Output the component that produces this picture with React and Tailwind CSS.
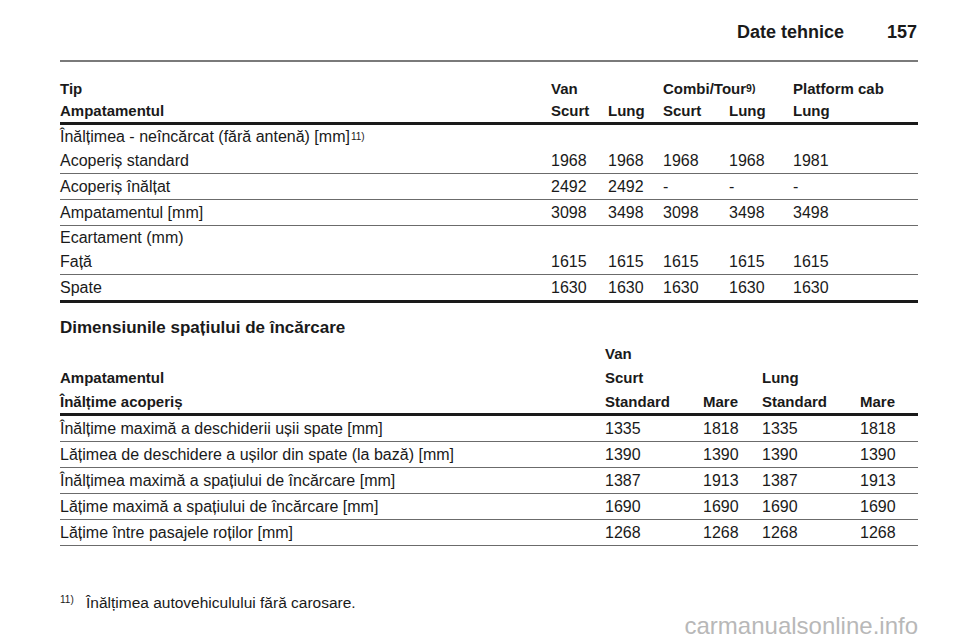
const specs = [
  { label: ["Înălțimea - neîncărcat (fără antenă) [mm]", "Acoperiș standard"], sup: "11)", values: ["1968", "1968", "1968", "1968", "1981"] },
  { label: ["Acoperiș înălțat"], values: ["2492", "2492", "-", "-", "-"] },
  { label: ["Ampatamentul [mm]"], values: ["3098", "3498", "3098", "3498", "3498"] },
  { label: ["Ecartament (mm)", "Față"], values: ["1615", "1615", "1615", "1615", "1615"] },
  { label: ["Spate"], values: ["1630", "1630", "1630", "1630", "1630"], last: true },
];

const cargo = [
  { label: "Înălțime maximă a deschiderii ușii spate [mm]", values: ["1335", "1818", "1335", "1818"] },
  { label: "Lățimea de deschidere a ușilor din spate (la bază) [mm]", values: ["1390", "1390", "1390", "1390"] },
  { label: "Înălțimea maximă a spațiului de încărcare [mm]", values: ["1387", "1913", "1387", "1913"] },
  { label: "Lățime maximă a spațiului de încărcare [mm]", values: ["1690", "1690", "1690", "1690"] },
  { label: "Lățime între pasajele roților [mm]", values: ["1268", "1268", "1268", "1268"] },
];

const grid1 = "grid grid-cols-[491px_57px_55px_66px_64px_1fr]";
const grid2 = "grid grid-cols-[545px_98px_59px_98px_1fr]";

function SpecRow({ row }) {
  const two = row.label.length === 2;
  return (
    <div className={`${grid1} ${row.last ? "border-b-[3px] border-[#1a1a1a]" : "border-b border-[#6b6b6b]"}`}>
      <div className="flex flex-col">
        {two && (
          <div className="leading-[23px] h-[23px]">
            {row.label[0]}
            {row.sup && <sup className="text-[10px] ml-[1px] relative -top-[2px]">{row.sup}</sup>}
          </div>
        )}
        <div className="leading-[25px] h-[25px]">{row.label[two ? 1 : 0]}</div>
      </div>
      {row.values.map((v, i) => (
        <div key={i} className="flex flex-col justify-end">
          <div className="leading-[25px] h-[25px]">{v}</div>
        </div>
      ))}
    </div>
  );
}

export default function App() {
  return (
    <div
      className="relative w-[960px] h-[642px] bg-white text-[#1a1a1a] pl-[60px] pr-[42px] overflow-hidden"
      style={{ fontFamily: '"Liberation Sans", Arial, sans-serif' }}
    >
      {/* page header */}
      <div className="pt-[20px] flex justify-end gap-[43px] text-[18px] font-bold leading-[24px] pr-[1px]">
        <span>Date tehnice</span>
        <span>157</span>
      </div>
      <div className="mt-[16px] h-[2px] bg-[#7a7a7a]"></div>

      {/* technical table */}
      <div className="mt-[15px] text-[16px]">
        <div className="font-bold text-[15px] border-b-[3px] border-[#1a1a1a]">
          <div className={`${grid1} leading-[23px] h-[23px]`}>
            <div>Tip</div>
            <div className="col-span-2">Van</div>
            <div className="col-span-2">
              Combi/Tour<sup className="text-[10.5px] relative -top-[2px]">9)</sup>
            </div>
            <div>Platform cab</div>
          </div>
          <div className={`${grid1} leading-[22px] h-[22px]`}>
            <div>Ampatamentul</div>
            <div>Scurt</div>
            <div>Lung</div>
            <div>Scurt</div>
            <div>Lung</div>
            <div>Lung</div>
          </div>
        </div>
        {specs.map((row, i) => (
          <SpecRow key={i} row={row} />
        ))}
      </div>

      {/* cargo dimensions */}
      <h2 className="mt-[13px] text-[17px] font-bold leading-[24px]">Dimensiunile spațiului de încărcare</h2>
      <div className="mt-[2px] text-[16px]">
        <div className="font-bold text-[15px] border-b-[3px] border-[#1a1a1a]">
          <div className={`${grid2} leading-[24px] h-[24px]`}>
            <div></div>
            <div>Van</div>
          </div>
          <div className={`${grid2} leading-[24px] h-[24px]`}>
            <div>Ampatamentul</div>
            <div className="col-span-2">Scurt</div>
            <div className="col-span-2">Lung</div>
          </div>
          <div className={`${grid2} leading-[23px] h-[23px]`}>
            <div>Înălțime acoperiș</div>
            <div>Standard</div>
            <div>Mare</div>
            <div>Standard</div>
            <div>Mare</div>
          </div>
        </div>
        {cargo.map((row, i) => (
          <div key={i} className={`${grid2} leading-[25px] h-[26px] border-b border-[#6b6b6b]`}>
            <div>{row.label}</div>
            {row.values.map((v, j) => (
              <div key={j}>{v}</div>
            ))}
          </div>
        ))}
      </div>

      {/* footnote */}
      <div className="mt-[45px] flex items-baseline text-[15.5px] leading-[24px]">
        <span className="w-[26px] text-[10px] relative -top-[5px]">11)</span>
        <span>Înălțimea autovehiculului fără carosare.</span>
      </div>

      <div className="absolute right-[42px] bottom-[2px] text-[24px] leading-[28px] text-[#b8b8b8]">
        carmanualsonline.info
      </div>
    </div>
  );
}
